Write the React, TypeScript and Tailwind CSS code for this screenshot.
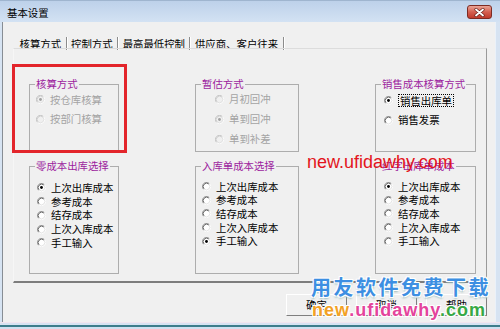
import React from "react";

function Radio({ checked, disabled }: { checked?: boolean; disabled?: boolean }) {
  const o1 = disabled ? "#b8b8b8" : "#8a8a8a";
  const i1 = disabled ? "#c8c8c8" : "#404040";
  const fill = disabled ? "#f0f0f0" : "#ffffff";
  const dot = disabled ? "#a0a0a0" : "#000000";
  return (
    <svg width="9" height="9" viewBox="0 0 12 12" className="shrink-0">
      <circle cx="6" cy="6" r="4.5" fill={fill} />
      <path d="M2.11 9.89 A5.5 5.5 0 0 1 9.89 2.11" fill="none" stroke={o1} strokeWidth="1" />
      <path d="M9.89 2.11 A5.5 5.5 0 0 1 2.11 9.89" fill="none" stroke="#ffffff" strokeWidth="1" />
      <path d="M2.82 9.18 A4.5 4.5 0 0 1 9.18 2.82" fill="none" stroke={i1} strokeWidth="1" />
      <path d="M9.18 2.82 A4.5 4.5 0 0 1 2.82 9.18" fill="none" stroke="#dcdcdc" strokeWidth="1" />
      {checked && <circle cx="6" cy="6" r="1.9" fill={dot} />}
    </svg>
  );
}

function Group({ label, children, className = "" }: { label: string; children: React.ReactNode; className?: string }) {
  return (
    <div className={"relative border border-[#adadad] " + className}>
      <span className="absolute left-[5px] top-[-8px] whitespace-nowrap bg-[#f0f0f0] px-[1px] leading-[14px] text-[#9c1d9e]">
        {label}
      </span>
      {children}
    </div>
  );
}

function Opt({
  label,
  checked,
  disabled,
  focus,
  row,
}: {
  label: string;
  checked?: boolean;
  disabled?: boolean;
  focus?: boolean;
  row: string;
}) {
  return (
    <div className={"flex items-center " + row}>
      <Radio checked={checked} disabled={disabled} />
      {focus ? (
        <span className="ml-[5px] whitespace-nowrap border border-dotted border-black px-[1px] leading-[11px]">{label}</span>
      ) : (
        <span className={"ml-[5px] whitespace-nowrap leading-[14px] " + (disabled ? "text-[#a4a4a4]" : "text-black")}>
          {label}
        </span>
      )}
    </div>
  );
}

const costOpts = ["上次出库成本", "参考成本", "结存成本", "上次入库成本", "手工输入"];

export default function App() {
  return (
    <div className="relative h-[329px] w-[500px] overflow-hidden bg-[#d0dff0] font-['Noto_Sans_CJK_SC','Noto_Sans',sans-serif] text-[10.4px] text-black">
      {/* title bar */}
      <div className="flex h-[22px] items-start justify-between border-t border-[#9fb5cf] bg-linear-to-b from-[#bdd1ea] to-[#d3e2f3]">
        <span className="pl-[7px] pt-[5px] leading-[14px]">基本设置</span>
        <div className="mr-[8px] mt-[4px] flex h-[14px] w-[25px] items-center justify-center rounded-[3px] border border-[#7d2b23] bg-linear-to-b from-[#e9a497] via-[#d45f50] to-[#c0392b]">
          <svg width="11" height="9" viewBox="0 0 11 9">
            <path d="M2 1.5 L9 7.5 M9 1.5 L2 7.5" stroke="#6b231c" strokeWidth="3.2" strokeLinecap="round" />
            <path d="M2 1.5 L9 7.5 M9 1.5 L2 7.5" stroke="#ffffff" strokeWidth="1.8" strokeLinecap="round" />
          </svg>
        </div>
      </div>

      {/* middle */}
      <div className="flex h-[300px]">
        <div className="w-[2px] bg-[#d6e3f2]" />
        <div className="flex w-[493px] flex-col border-l border-[#878d94] bg-[#f0f0f0]">
          {/* tabs */}
          <div className="ml-[12px] mt-[15px] flex h-[13px]">
            {["核算方式", "控制方式", "最高最低控制", "供应商、客户往来"].map((t) => (
              <div
                key={t}
                className="flex items-center whitespace-nowrap border-r border-[#8c8c8c] px-[4.5px] leading-[13px] shadow-[1px_0_0_#ffffff]"
              >
                {t}
              </div>
            ))}
          </div>

          {/* panel */}
          <div className="-mt-[2px] ml-[10px] h-[235px] w-[474px] border-b-2 border-l border-r border-t border-b-[#7d7d7d] border-l-[#f6f6f6] border-r-[#9a9a9a] border-t-[#dcdcdc] pl-[15px] pt-[35px]">
            <div className="grid grid-cols-[90px_104px_101px] grid-rows-[68px_108px] gap-x-[76px] gap-y-[14px]">
              <Group label="核算方式">
                <div className="flex flex-col pl-[6px] pt-[5px]">
                  <Opt label="按仓库核算" checked disabled row="h-[19.5px]" />
                  <Opt label="按部门核算" disabled row="h-[19.5px]" />
                </div>
              </Group>
              <Group label="暂估方式">
                <div className="flex flex-col pl-[19px] pt-[4px]">
                  <Opt label="月初回冲" disabled row="h-[20px]" />
                  <Opt label="单到回冲" checked disabled row="h-[20px]" />
                  <Opt label="单到补差" disabled row="h-[20px]" />
                </div>
              </Group>
              <Group label="销售成本核算方式">
                <div className="flex flex-col pl-[8px] pt-[5px]">
                  <Opt label="销售出库单" checked focus row="h-[20px]" />
                  <Opt label="销售发票" row="h-[20px]" />
                </div>
              </Group>

              <Group label="零成本出库选择">
                <div className="flex flex-col pl-[7px] pt-[14px]">
                  {costOpts.map((o, i) => (
                    <Opt key={o} label={o} checked={i === 0} row="h-[13.75px]" />
                  ))}
                </div>
              </Group>
              <Group label="入库单成本选择">
                <div className="flex flex-col pl-[6px] pt-[13px]">
                  {costOpts.map((o, i) => (
                    <Opt key={o} label={o} checked={i === 4} row="h-[13.6px]" />
                  ))}
                </div>
              </Group>
              <Group label="红字出库单成本">
                <div className="flex flex-col pl-[8px] pt-[13px]">
                  {costOpts.map((o, i) => (
                    <Opt key={o} label={o} checked={i === 0} row="h-[13.6px]" />
                  ))}
                </div>
              </Group>
            </div>
          </div>

          {/* buttons */}
          <div className="mt-[11px] flex justify-end gap-[9px] pr-[8px]">
            {["确定", "取消", "帮助"].map((b) => (
              <div
                key={b}
                className="flex h-[22px] w-[61px] items-center justify-center border border-b-[#7f7f7f] border-l-[#ffffff] border-r-[#7f7f7f] border-t-[#ffffff] leading-[14px]"
              >
                {b}
              </div>
            ))}
          </div>
        </div>
        <div className="w-[5px] border-l border-[#eaf1f9] bg-[#d6e3f2]" />
      </div>

      {/* bottom frame */}
      <div className="flex h-[7px] flex-col">
        <div className="h-[1px] bg-[#f1e4ee]" />
        <div className="h-[2px] bg-[#d6e3f2]" />
        <div className="h-[2px] bg-[#3d7d8b]" />
        <div className="h-[2px] bg-[#cfe0f0]" />
      </div>

      {/* annotation overlays */}
      <div className="absolute left-[12px] top-[64px] h-[89px] w-[115px] border-[3px] border-[#e3252b]" />
      <div className="absolute left-[307px] top-[153px] whitespace-nowrap font-['Liberation_Sans',Arial,sans-serif] text-[18px] leading-none text-[#e3141c]">
        new.ufidawhy.com
      </div>
      <div className="absolute left-[311px] top-[277px] whitespace-nowrap text-[20px] font-bold leading-none tracking-[2.5px] text-[#3d8fe2] [text-shadow:1px_1px_0_#fff,-1px_-1px_0_#fff,1px_-1px_0_#fff,-1px_1px_0_#fff,0_2px_2px_#9bb]">
        用友软件免费下载
      </div>
      <div className="absolute left-[312px] top-[301px] whitespace-nowrap font-['Liberation_Sans',Arial,sans-serif] text-[18px] font-bold leading-none tracking-[1px] [text-shadow:1px_1px_0_#fff,-1px_-1px_0_#fff,1px_-1px_0_#fff,-1px_1px_0_#fff]">
        <span className="text-[#f2a125]">new</span>
        <span className="text-[#e4449c]">.ufidawhy</span>
        <span className="text-[#37a845]">.com</span>
      </div>
    </div>
  );
}
